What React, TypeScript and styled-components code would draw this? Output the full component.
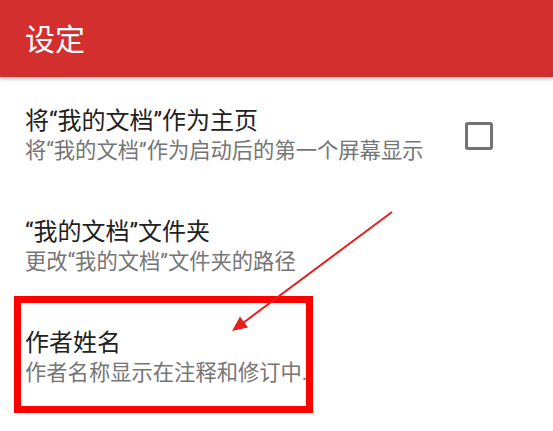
import styled, { createGlobalStyle } from 'styled-components'

const GlobalStyle = createGlobalStyle`
html, body {
    margin: 0;
    padding: 0;
    background: #fff;
}
body {
    font-family: Roboto, "Noto Sans CJK SC", sans-serif;
}
`;

const Page = styled.div`
position: relative;
width: 553px;
height: 431px;
overflow: hidden;
background: #fff;
`;

const AppBar = styled.header`
height: 77px;
box-sizing: border-box;
display: flex;
align-items: center;
padding: 0 25px 4px;
background-color: #d32f2f;
color: #fff;
font-size: 30px;
box-shadow: 0 2px 4px rgba(0, 0, 0, 0.25);
position: relative;
z-index: 1;
`;

const PrefList = styled.ul`
list-style: none;
margin: 0;
padding: 3px 0 0;
`;

const PrefRow = styled.li`
height: 111px;
box-sizing: border-box;
display: flex;
align-items: center;
justify-content: space-between;
padding: 0 60px 0 25px;
`;

const PrefText = styled.div`
display: flex;
flex-direction: column;
white-space: nowrap;
`;

const PrefTitle = styled.div`
font-size: 24px;
line-height: 30px;
color: #212121;
`;

const PrefSummary = styled.div`
font-size: 21.3px;
line-height: 30px;
color: #757575;
`;

const CheckBox = styled.span<{ checked: boolean }>`
width: 28px;
height: 28px;
box-sizing: border-box;
border: 3px solid #737373;
border-radius: 3px;
background: ${props => props.checked ? '#737373' : 'transparent'};
flex-shrink: 0;
`;

const Highlight = styled.div`
position: absolute;
left: 14px;
top: 296px;
width: 299px;
height: 117px;
box-sizing: border-box;
border: 7px solid #f00;
pointer-events: none;
`;

const ArrowLayer = styled.svg`
position: absolute;
left: 0;
top: 0;
pointer-events: none;
`;

const prefs = [
    { title: '将“我的文档”作为主页', summary: '将“我的文档”作为启动后的第一个屏幕显示', checkbox: true },
    { title: '“我的文档”文件夹', summary: '更改“我的文档”文件夹的路径', checkbox: false },
    { title: '作者姓名', summary: '作者名称显示在注释和修订中.', checkbox: false },
];

const App = () => {
    return (
        <>
            <GlobalStyle />
            <Page>
                <AppBar>设定</AppBar>
                <PrefList>
                    {prefs.map((item, index) => (
                        <PrefRow key={index}>
                            <PrefText>
                                <PrefTitle>{item.title}</PrefTitle>
                                <PrefSummary>{item.summary}</PrefSummary>
                            </PrefText>
                            {item.checkbox && <CheckBox checked={false} />}
                        </PrefRow>
                    ))}
                </PrefList>
                <Highlight />
                <ArrowLayer width="553" height="431" viewBox="0 0 553 431">
                    <line x1="392" y1="212" x2="243" y2="323" stroke="#e3211f" strokeWidth="2" />
                    <polygon points="232,331 248,327.5 240,316.5" fill="#e3211f" />
                </ArrowLayer>
            </Page>
        </>
    )
}

export default App;
